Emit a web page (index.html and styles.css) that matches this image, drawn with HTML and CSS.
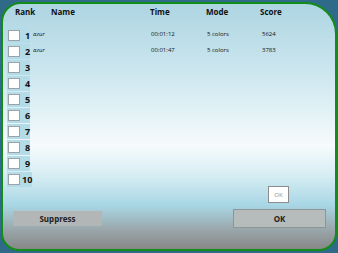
FILE: index.html
```html
<!DOCTYPE html>
<html lang="en">
<head>
    <meta charset="UTF-8">
    <title>Scores</title>
    <link rel="stylesheet" href="styles.css">
</head>
<body>
    <div class="panel">
        <div class="row head">
            <div class="c-rank">Rank</div>
            <div class="c-name">Name</div>
            <div class="c-time">Time</div>
            <div class="c-mode">Mode</div>
            <div class="c-score">Score</div>
        </div>

        <div class="rows">
            <div class="row">
                <div class="rank"><span class="box"></span><b>1</b></div>
                <div class="name">azur</div>
                <div class="time">00:01:12</div>
                <div class="mode">5 colors</div>
                <div class="score">5624</div>
            </div>
            <div class="row">
                <div class="rank"><span class="box"></span><b>2</b></div>
                <div class="name">azur</div>
                <div class="time">00:01:47</div>
                <div class="mode">5 colors</div>
                <div class="score">3783</div>
            </div>
            <div class="row"><div class="rank"><span class="box"></span><b>3</b></div></div>
            <div class="row"><div class="rank"><span class="box"></span><b>4</b></div></div>
            <div class="row"><div class="rank"><span class="box"></span><b>5</b></div></div>
            <div class="row"><div class="rank"><span class="box"></span><b>6</b></div></div>
            <div class="row"><div class="rank"><span class="box"></span><b>7</b></div></div>
            <div class="row"><div class="rank"><span class="box"></span><b>8</b></div></div>
            <div class="row"><div class="rank"><span class="box"></span><b>9</b></div></div>
            <div class="row"><div class="rank wide"><span class="box"></span><b>10</b></div></div>
        </div>

        <div class="small-line">
            <button class="small-ok">OK</button>
        </div>

        <div class="buttons">
            <button class="btn suppress">Suppress</button>
            <button class="btn ok">OK</button>
        </div>
    </div>
</body>
</html>
```

FILE: styles.css
```css
* {
    box-sizing: border-box;
}

body {
    margin: 0;
    background-color: #2f6b88;
    font-family: "Open Sans", "Noto Sans", sans-serif;
    color: #111;
}

.panel {
    margin: 2px 1px;
    height: 249px;
    border: 2px solid #138c18;
    border-radius: 20px 32px 18px 18px;
    background: linear-gradient(to bottom, #add5e2 0%, #cfe8f0 30%, #f6fbfc 58%, #d6edf3 70%, #a9d7e5 82%, #9aa7ab 92%, #878787 100%);
    display: flex;
    flex-direction: column;
    padding: 0 4px 21px;
    overflow: hidden;
}

/* Header */
.head {
    display: flex;
    font-size: 8px;
    line-height: 8px;
    font-weight: bold;
    padding-top: 4px;
    margin-bottom: 12px;
}

.c-rank { width: 44px; padding-left: 8px; }
.c-name { width: 99px; }
.c-time { width: 56px; }
.c-mode { width: 54px; }
.c-score { width: 40px; }

/* Score rows */
.rows {
    height: 156px;
    flex-shrink: 0;
}

.rows .row {
    display: flex;
    align-items: flex-start;
    height: 15px;
    margin-bottom: 1px;
    font-size: 6px;
    line-height: 8px;
}

.name, .time, .mode, .score {
    padding-top: 2px;
}

.name { width: 118px; font-style: italic; }
.time { width: 56px; }
.mode { width: 55px; }
.score { width: 40px; }

.rank {
    display: flex;
    align-items: center;
    width: 23px;
    height: 15px;
    margin-right: 3px;
    padding-left: 1px;
    background-color: #b3dbe8;
}

.rank.wide {
    width: 25px;
}

.rank b {
    font-size: 9px;
    margin-left: 5px;
}

.rank.wide b {
    margin-left: 2px;
}

.box {
    width: 12px;
    height: 11px;
    background-color: #fff;
    border: 1px solid #9aa4a8;
    flex-shrink: 0;
}

/* Bottom area */
.small-line {
    display: flex;
    justify-content: flex-end;
    padding-right: 42px;
    margin-top: auto;
}

.small-ok {
    width: 21px;
    height: 17px;
    background-color: #fff;
    border: 1px solid #8c8c8c;
    color: #8c8c8c;
    font-size: 6px;
    padding: 0;
    font-family: inherit;
}

.buttons {
    display: flex;
    justify-content: space-between;
    align-items: center;
    padding: 6px 5px 0 6px;
}

.btn {
    font-family: inherit;
    font-weight: bold;
    font-size: 8px;
    color: #222;
    padding: 0;
}

.suppress {
    width: 89px;
    height: 15px;
    background-color: #b2b6b6;
    border: none;
}

.ok {
    width: 93px;
    height: 19px;
    background-color: #b6bbbb;
    border: 1px solid #8d9696;
}
```
